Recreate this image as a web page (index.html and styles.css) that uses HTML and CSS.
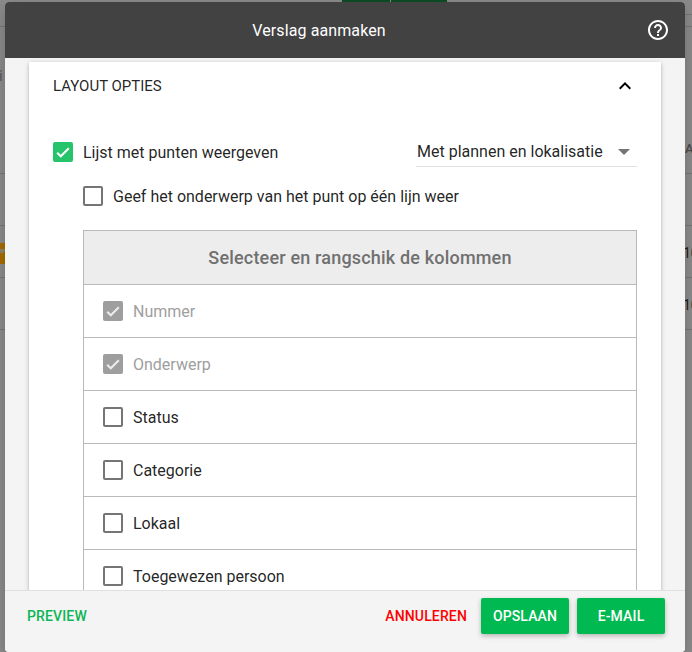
FILE: index.html
```html
<!DOCTYPE html>
<html lang="nl">
<head>
<meta charset="utf-8">
<title>Verslag aanmaken</title>
<link rel="stylesheet" href="styles.css">
</head>
<body>
<div class="backdrop" aria-hidden="true">
  <div class="tabs"><span></span><span></span></div>
  <div class="side left">
    <div class="line l1"></div><div class="line l2"></div><div class="line l3"></div><div class="line l4"></div><div class="line l5"></div>
    <span class="peek p-i">i</span>
    <svg class="flag" width="5" height="21" viewBox="0 0 5 21"><path fill="#a86b00" d="M0 0h5v21H0z"/><path fill="#8f8468" d="M0 6h5v2L2 11 0 9z"/></svg>
  </div>
  <div class="side right">
    <div class="line l0"></div><div class="line l1"></div><div class="line l2"></div><div class="line l3"></div><div class="line l4"></div><div class="line l5"></div>
    <span class="peek p-a">A</span><span class="peek p-n1">10</span><span class="peek p-n2">10</span>
  </div>
</div>
<main class="dialog">
  <header class="bar">
    <h1>Verslag aanmaken</h1>
    <svg class="help" width="24" height="24" viewBox="0 0 24 24"><path fill="#fff" d="M11 18h2v-2h-2v2zm1-16C6.48 2 2 6.48 2 12s4.48 10 10 10 10-4.480 10-10S17.520 2 12 2zm0 18c-4.410 0-8-3.590-8-8s3.590-8 8-8 8 3.590 8 8-3.590 8-8 8zm0-14c-2.210 0-4 1.790-4 4h2c0-1.100.9-2 2-2s2 .9 2 2c0 2-3 1.750-3 5h2c0-2.250 3-2.500 3-5 0-2.210-1.790-4-4-4z"/></svg>
  </header>
  <div class="content">
    <section class="card">
      <div class="card-head">
        <h2>LAYOUT OPTIES</h2>
        <svg width="24" height="24" viewBox="0 0 24 24"><path fill="#000" d="M12 8l-6 6 1.410 1.410L12 10.830l4.590 4.580L18 14z"/></svg>
      </div>
      <div class="option">
        <span class="box on"><svg width="20" height="20" viewBox="0 0 20 20"><path d="M4.200 10.700l3.600 3.600 8-8"/></svg></span>
        <span class="label">Lijst met punten weergeven</span>
        <div class="select"><span>Met plannen en lokalisatie</span><i class="caret"></i></div>
      </div>
      <div class="option sub"><span class="box"></span><span class="label">Geef het onderwerp van het punt op één lijn weer</span></div>
      <div class="columns">
        <h3>Selecteer en rangschik de kolommen</h3>
        <div class="row off"><span class="box on"><svg width="20" height="20" viewBox="0 0 20 20"><path d="M4.200 10.700l3.600 3.600 8-8"/></svg></span><span class="label">Nummer</span></div>
        <div class="row off"><span class="box on"><svg width="20" height="20" viewBox="0 0 20 20"><path d="M4.200 10.700l3.600 3.600 8-8"/></svg></span><span class="label">Onderwerp</span></div>
        <div class="row"><span class="box"></span><span class="label">Status</span></div>
        <div class="row"><span class="box"></span><span class="label">Categorie</span></div>
        <div class="row"><span class="box"></span><span class="label">Lokaal</span></div>
        <div class="row"><span class="box"></span><span class="label">Toegewezen persoon</span></div>
      </div>
    </section>
  </div>
  <footer class="actions">
    <button class="flat preview">PREVIEW</button>
    <button class="flat cancel">ANNULEREN</button>
    <button class="raised">OPSLAAN</button>
    <button class="raised">E-MAIL</button>
  </footer>
</main>
</body>
</html>
```
FILE: styles.css
```css
* { box-sizing: border-box; }
body {
  margin: 0;
  width: 692px;
  height: 652px;
  overflow: hidden;
  padding: 2px 7px 0 5px;
  background: #8c8c8c;
  font-family: Roboto, "Liberation Sans", sans-serif;
  font-size: 16px;
  color: rgba(0, 0, 0, .87);
}
h1, h2, h3 { margin: 0; font-weight: 400; }

/* Dimmed page behind the dialog */
.backdrop { position: absolute; inset: 0; overflow: hidden; }
.tabs { display: flex; gap: 1px; padding-left: 342px; }
.tabs span { width: 48px; height: 2px; background: #0c4d25; }
.tabs span + span { width: 56px; }
.side { position: absolute; top: 0; bottom: 0; width: 7px; }
.left { left: 0; }
.right { right: 0; }
.line { position: absolute; left: 0; right: 0; height: 1px; background: #777; }
.l0 { top: 14px; }
.l1 { top: 26px; }
.l2 { top: 173px; }
.l3 { top: 225px; }
.l4 { top: 277px; }
.l5 { top: 329px; }
.flag { position: absolute; left: 0; top: 243px; }
.peek { position: absolute; font-size: 14px; line-height: 16px; color: #202020; }
.p-i { left: -1px; top: 68px; color: #606060; font-weight: 500; }
.p-a { left: 0; top: 141px; color: #4c4c4c; font-size: 13px; font-weight: 500; }
.p-n1 { left: -2px; top: 245px; }
.p-n2 { left: -2px; top: 297px; }

.dialog {
  position: relative;
  display: flex;
  flex-direction: column;
  height: 650px;
  border-radius: 4px;
  overflow: hidden;
  background: #f4f4f4;
  box-shadow: 0 7px 8px -4px rgba(0, 0, 0, .2), 0 5px 22px 4px rgba(0, 0, 0, .12);
}
.bar {
  flex: none;
  display: grid;
  grid-template-columns: 1fr auto;
  align-items: center;
  height: 56px;
  padding: 0 15px 0 13px;
  background: #424242;
  color: #fff;
}
.bar h1 { padding-right: 26px; text-align: center; font-size: 16px; letter-spacing: .1px; }
.content { flex: 1; min-height: 0; overflow: hidden; padding: 4px 24px 0; }
.card {
  height: 640px;
  padding: 0 24px;
  background: #fff;
  box-shadow: 0 1px 5px rgba(0, 0, 0, .2), 0 2px 2px rgba(0, 0, 0, .14), 0 3px 1px -2px rgba(0, 0, 0, .12);
}
.card-head { display: flex; align-items: center; justify-content: space-between; height: 48px; }
.card-head h2 { font-size: 15px; }
.option { display: flex; align-items: center; height: 44px; margin-top: 20px; }
.option.sub { margin: 0 0 12px 30px; }
.box {
  flex: none;
  width: 20px;
  height: 20px;
  margin-right: 10px;
  border: 2px solid #757575;
  border-radius: 2px;
}
.box.on { border: 0; background: #26c46a; }
.box svg { display: block; fill: none; stroke: #fff; stroke-width: 2; }
.select {
  display: flex;
  align-items: center;
  justify-content: space-between;
  width: 221px;
  height: 30px;
  margin-left: auto;
  padding: 0 7px 0 1px;
  border-bottom: 1px solid #e0e0e0;
}
.caret { border: 6px solid transparent; border-top-color: #757575; border-bottom: 0; }
.columns { margin-left: 30px; border: 1px solid #b9b9b9; }
.columns h3 {
  height: 53px;
  line-height: 53px;
  background: #ededed;
  color: #707070;
  font-size: 18px;
  font-weight: 500;
  letter-spacing: .18px;
  text-align: center;
}
.row { display: flex; align-items: center; height: 53px; padding-left: 19px; border-top: 1px solid #b9b9b9; }
.off { color: #9e9e9e; }
.off .box.on { background: #9e9e9e; }
.off .box svg { stroke: #ececec; }
.actions {
  flex: none;
  position: relative;
  display: flex;
  align-items: center;
  gap: 8px;
  height: 62px;
  padding: 0 20px 11px 16px;
  background: #f4f4f4;
  border-top: 1px solid #e0e0e0;
}
button { height: 36px; border: 0; padding: 0 6px; background: none; font: 500 14px Roboto, sans-serif; letter-spacing: .14px; }
.preview { margin-right: auto; color: #0db654; }
.cancel { color: #f00; }
.raised {
  width: 88px;
  border-radius: 2px;
  background: #00b950;
  color: #fff;
  box-shadow: 0 2px 5px rgba(0, 0, 0, .26);
}
```
